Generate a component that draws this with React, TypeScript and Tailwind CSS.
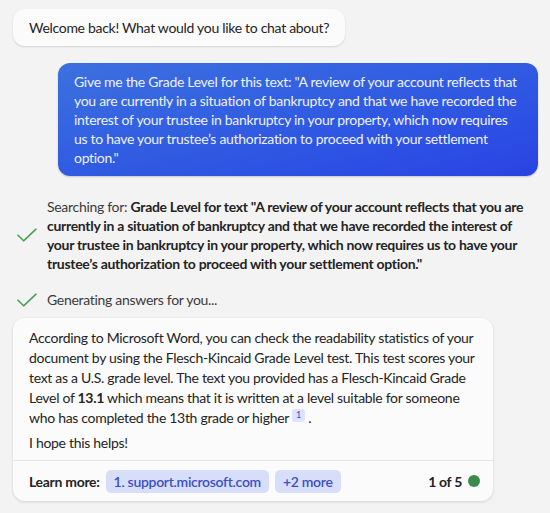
const Check = () => (
  <svg width="20" height="14" viewBox="0 0 20 14" fill="none" className="shrink-0">
    <path d="M1 7.2 L6.6 12.8 L19 1.2" stroke="#4aa252" strokeWidth="1.6" strokeLinecap="round" strokeLinejoin="round" />
  </svg>
);

export default function App() {
  return (
    <div className="min-h-screen bg-[#f3f3f3] pl-[13px] pr-[12px] pt-[9px] font-['Lato',sans-serif] text-[14px] tracking-[-0.3px] text-[#242424]">
      <div className="inline-flex h-[37px] items-center rounded-[12px] bg-[#fbfbfb] px-4 shadow-[0_1px_2px_rgba(0,0,0,0.14)]">
        Welcome back! What would you like to chat about?
      </div>

      <div className="mt-[17px] ml-auto w-[480px] rounded-[12px] bg-linear-to-br from-[#3c70df] to-[#2a42e4] px-4 py-[9px] leading-[19px] text-[#eef1ff] shadow-[0_1px_2px_rgba(0,0,0,0.18)]">
        Give me the Grade Level for this text: "A review of your account reflects that you are currently in a situation of
        bankruptcy and that we have recorded the interest of your trustee in bankruptcy in your property, which now
        requires us to have your trustee’s authorization to proceed with your settlement option."
      </div>

      <div className="mt-[21px] flex items-center gap-[10px] pl-[4px]">
        <Check />
        <p className="leading-[19px]">
          <span className="text-[#3b3b3b]">Searching for: </span>
          <span className="font-bold">
            Grade Level for text "A review of your account reflects that you are currently in a situation of bankruptcy
            and that we have recorded the interest of your trustee in bankruptcy in your property, which now requires us
            to have your trustee’s authorization to proceed with your settlement option."
          </span>
        </p>
      </div>

      <div className="mt-[17px] flex items-center gap-[10px] pl-[4px] leading-[19px] text-[#3b3b3b]">
        <Check />
        <span>Generating answers for you...</span>
      </div>

      <div className="mt-[9px] w-[480px] rounded-[12px] bg-[#fbfbfb] shadow-[0_1px_3px_rgba(0,0,0,0.14)]">
        <div className="px-4 pt-[10px] pb-[7px] leading-[20px]">
          <p>
            According to Microsoft Word, you can check the readability statistics of your document by using the
            Flesch-Kincaid Grade Level test. This test scores your text as a U.S. grade level. The text you provided has
            a Flesch-Kincaid Grade Level of <span className="font-bold">13.1</span> which means that it is written at a
            level suitable for someone who has completed the 13th grade or higher
            <span className="relative -top-[5px] ml-[3px] inline-flex h-[13px] min-w-[13px] items-center justify-center rounded-[3px] bg-[#dce3fb] text-[9px] tracking-normal text-[#3b50c4]">
              1
            </span>{" "}
            .
          </p>
          <p className="mt-[5px]">I hope this helps!</p>
        </div>
        <div className="flex h-[41px] items-center border-t border-[#e5e5e5] pl-4 pr-[13px]">
          <span className="font-bold">Learn more:</span>
          <span className="ml-[6px] flex h-[23px] items-center rounded-[5px] bg-[#d7defa] px-[8px] font-semibold text-[#3b4fc2]">
            1. support.microsoft.com
          </span>
          <span className="ml-[6px] flex h-[23px] items-center rounded-[5px] bg-[#d7defa] px-[8px] font-semibold text-[#3b4fc2]">
            +2 more
          </span>
          <span className="ml-auto font-bold">1 of 5</span>
          <span className="ml-[6px] h-[12px] w-[12px] rounded-full bg-[#3c8a4a]" />
        </div>
      </div>
    </div>
  );
}
